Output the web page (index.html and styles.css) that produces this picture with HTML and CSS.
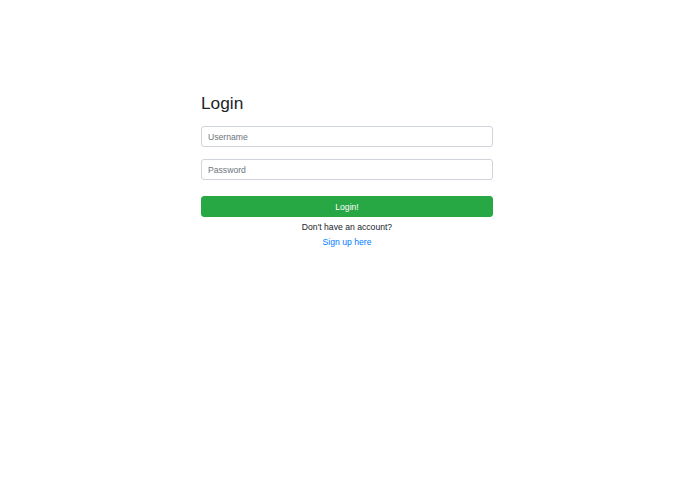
FILE: index.html
```html
<!DOCTYPE html>
<html>
<head>
<meta charset="utf-8">
<link rel="stylesheet" href="styles.css">
</head>
<body>
<main class="page">
  <form class="login">
    <h1 class="title">Login</h1>
    <input class="field" type="text" placeholder="Username">
    <input class="field" type="password" placeholder="Password">
    <button class="btn" type="button">Login!</button>
    <p class="note">Don't have an account?</p>
    <a class="link" href="#">Sign up here</a>
  </form>
</main>
</body>
</html>
```
FILE: styles.css
```css
html, body {
  margin: 0;
  padding: 0;
  background: #fff;
}
body {
  font-family: "Liberation Sans", Arial, sans-serif;
  font-size: 8.64px;
  color: #212529;
}
.page {
  display: flex;
  justify-content: center;
  padding: 93px 1px 0 0;
}
.login {
  width: 292px;
  display: flex;
  flex-direction: column;
}
.title {
  margin: 0 0 12px 0;
  font-size: 17.3px;
  font-weight: 400;
  line-height: 21px;
}
.field {
  box-sizing: border-box;
  height: 21px;
  margin: 0 0 12px 0;
  padding: 0 6px;
  border: 1px solid #ced4da;
  border-radius: 3px;
  font-family: inherit;
  font-size: 8.64px;
  color: #495057;
  outline: none;
}
.field::placeholder {
  color: #6c757d;
}
.field + .btn {
  margin-top: 4px;
}
.btn {
  box-sizing: border-box;
  height: 21px;
  border: 1px solid #28a745;
  border-radius: 3px;
  background: #28a745;
  color: #fff;
  font-family: inherit;
  font-size: 8.64px;
  padding: 0;
}
.note {
  margin: 4px 0 0 0;
  text-align: center;
  font-size: 8.64px;
  line-height: 13px;
}
.link {
  margin-top: 2px;
  text-align: center;
  font-size: 8.64px;
  line-height: 13px;
  color: #007bff;
  text-decoration: none;
  align-self: center;
}
```
